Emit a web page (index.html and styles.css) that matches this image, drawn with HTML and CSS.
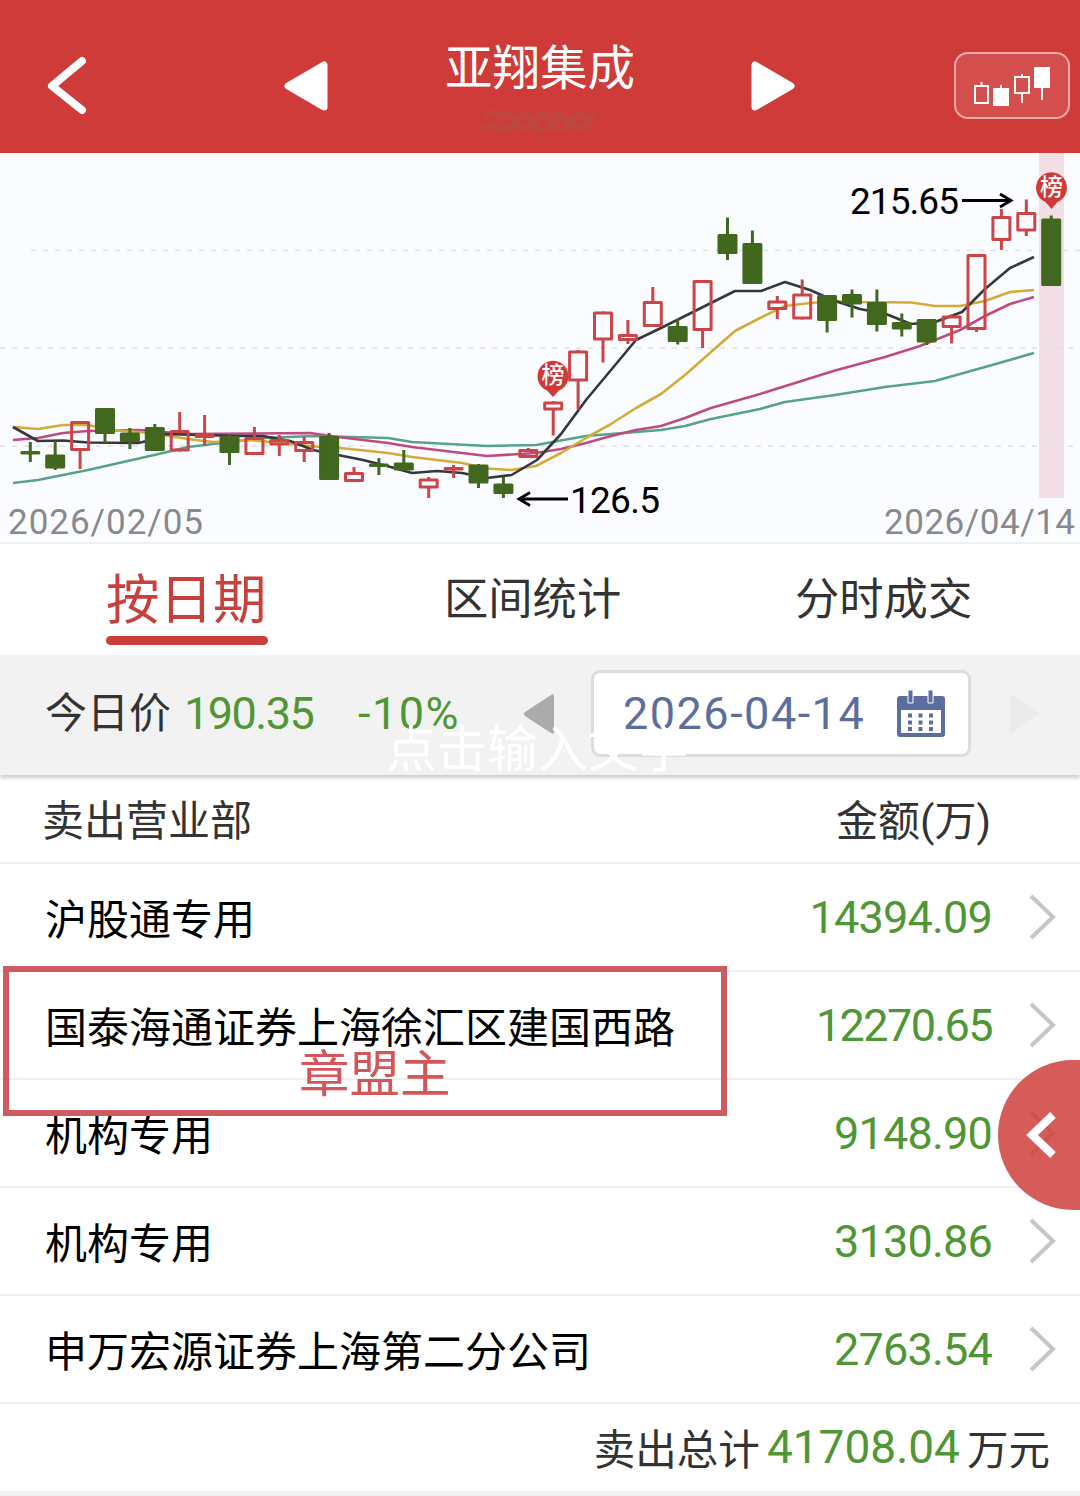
FILE: index.html
```
<!DOCTYPE html>
<html lang="zh-CN">
<head>
    <meta charset="UTF-8">
    <meta name="viewport" content="width=device-width, initial-scale=1.0">
    <title>亚翔集成</title>
    <link rel="stylesheet" href="styles.css">
</head>
<body>
    <header class="top-bar">
        <svg class="back" width="44" height="62" viewBox="0 0 44 62"><path d="M37 6L7 31L37 55"/></svg>
        <svg class="arrow prev" width="44" height="50" viewBox="0 0 44 50"><path d="M40 4V46L4 25Z"/></svg>
        <div class="title">
            <h1>亚翔集成</h1>
            <svg class="code" width="126" height="32" viewBox="0 0 126 32"><path d="M4 12l10-4 6 6 9-5 8 8 9-7 7 6 11-7 6 7 9-6 8 7 11-8 9 6 8-5M2 25l9-4 10 5 12-6 8 5 11-4 9 6 10-6 11 4 9-6 8 6 11-4"/></svg>
        </div>
        <svg class="arrow next" width="44" height="50" viewBox="0 0 44 50"><path d="M4 4V46L40 25Z"/></svg>
        <button class="kline-btn">
            <svg width="80" height="42" viewBox="0 0 80 42">
                <path class="outline" d="M3 21h13v17H3zM9.500 17v4M43 12h14v16H43zM50 9v3M50 28v10M29 20v4M70 23v12"/>
                <path class="solid" d="M21 23h16v18H21zM62 2h16v21H62z"/>
            </svg>
        </button>
    </header>

    <!-- K line chart -->
    <section class="chart">
        <svg id="kline" width="1080" height="390" viewBox="0 153 1080 390">
            <rect class="today" x="1039" y="153" width="25" height="345"/>
            <path class="grid" d="M31 250.5H1080M0 348H1080M0 446H1080"/>
            <polyline class="ma ma60" points="13,483 38,480 63,475 88,470 163,453 188,447 213,444 238,441 263,438 313,436 388,438 412,442 487,446 536,445 586,436 661,430 685,426 711,419 760,409 785,402 835,395 885,387 935,381 985,367 1034,353"/>
            <polyline class="ma ma20" points="13,440 38,438 63,433 88,431 138,430 188,434 310,433 338,437 388,443 412,447 487,456 520,454 536,453 561,449 586,443 611,436 636,430 661,426 685,418 711,408 760,394 835,370.5 885,357 920,346 960,330 985,316 1010,304 1034,297"/>
            <polyline class="ma ma10" points="13,427 38,429 63,425 88,425 113,430 150,433 188,439 213,442 250,440 290,444 320,447 340,448 388,453 412,457 437,460 462,463 487,468.5 511,470 536,466 561,453 586,438 611,424 636,408 661,394 685,375 711,352 735,331 760,318 785,306 810,303 835,301 860,302 911,302.5 935,306 960,306 985,301 1010,292 1034,290"/>
            <polyline class="ma ma5" points="13,427 38,441 63,440.5 88,442.5 138,443 147,441 163,434 238,436 263,436 290,441 313,450 338,455 363,460 387,466 412,473 437,471 462,473 487,478 511.5,475 537,460 561,434 586,400 611,370 636,340 661,328 735,291 761,291 785,282 810,290 835,301 860,309 886,314 911,324 935,322 962,312 985,289 1010,268 1034,257"/>
            <g id="candles"></g>
            <g class="pin">
                <path d="M553 397L547 390.500A15.500 15.500 0 1 1 559 390.500Z"/>
                <text x="553" y="383">榜</text>
            </g>
            <g class="pin">
                <path d="M1051.500 209L1045.500 202A15.500 15.500 0 1 1 1057.500 202Z"/>
                <text x="1051.500" y="195">榜</text>
            </g>
            <path class="pointer" d="M962 200.500H1009M1000 194L1011 200.500L1000 207M568 499H521M530 492.500L519 499L530 505.500"/>
            <text class="price" x="850" y="214" textLength="109">215.65</text>
            <text class="price" x="570" y="512.500" textLength="90">126.5</text>
            <text class="day" x="8" y="534" textLength="195">2026/02/05</text>
            <text class="day" x="884" y="534" textLength="191">2026/04/14</text>
        </svg>
    </section>

    <nav class="tabs">
        <a class="tab active">按日期</a>
        <a class="tab">区间统计</a>
        <a class="tab">分时成交</a>
    </nav>

    <section class="date-bar">
        <span class="label">今日价</span>
        <span class="num price-now">190.35</span>
        <span class="num change">-10%</span>
        <svg class="day-prev" width="32" height="42" viewBox="0 0 32 42"><path d="M31 3V39Q31 42 28 40L2 23Q0 21 2 19L28 2Q31 0 31 3Z"/></svg>
        <div class="date-box">
            <span class="num">2026-04-14</span>
            <svg width="48" height="48" viewBox="0 0 48 48">
                <path fill-rule="evenodd" d="M3 6H45Q48 6 48 9V44Q48 47 45 47H3Q0 47 0 44V9Q0 6 3 6ZM4 20V43H44V20Z"/>
                <path class="ring" d="M11 0h5v13h-5zM31 0h5v13h-5z"/>
                <path d="M11 23.500h4v4h-4zM21.500 23.500h4v4h-4zM32 23.500h4v4h-4zM11 30.500h4v4h-4zM21.500 30.500h4v4h-4zM32 30.500h4v4h-4zM11 37h4v4h-4zM21.500 37h4v4h-4zM32 37h4v4h-4z"/>
            </svg>
        </div>
        <svg class="day-next" width="32" height="42" viewBox="0 0 32 42"><path d="M1 1V41L31 21Z"/></svg>
        <span class="watermark">点击输入文字</span>
    </section>

    <!-- Sell seats -->
    <section class="seats">
        <div class="row head">
            <span>卖出营业部</span>
            <span class="amount">金额(万)</span>
        </div>
        <div class="row">
            <span class="name">沪股通专用</span>
            <span class="num amount">14394.09</span>
            <svg class="more" width="28" height="46" viewBox="0 0 28 46"><path d="M2 2L24 23L2 44"/></svg>
        </div>
        <div class="row">
            <span class="name">国泰海通证券上海徐汇区建国西路</span>
            <span class="num amount tight">12270.65</span>
            <svg class="more" width="28" height="46" viewBox="0 0 28 46"><path d="M2 2L24 23L2 44"/></svg>
            <div class="mark"><span>章盟主</span></div>
        </div>
        <div class="row">
            <span class="name">机构专用</span>
            <span class="num amount">9148.90</span>
            <svg class="more" width="28" height="46" viewBox="0 0 28 46"><path d="M2 2L24 23L2 44"/></svg>
            <button class="drawer">
                <svg width="32" height="48" viewBox="0 0 32 48"><path d="M27 4L6 24L27 44"/></svg>
            </button>
        </div>
        <div class="row">
            <span class="name">机构专用</span>
            <span class="num amount">3130.86</span>
            <svg class="more" width="28" height="46" viewBox="0 0 28 46"><path d="M2 2L24 23L2 44"/></svg>
        </div>
        <div class="row">
            <span class="name">申万宏源证券上海第二分公司</span>
            <span class="num amount">2763.54</span>
            <svg class="more" width="28" height="46" viewBox="0 0 28 46"><path d="M2 2L24 23L2 44"/></svg>
        </div>
        <div class="total">
            <span>卖出总计</span>
            <span class="num">41708.04</span>
            <span>万元</span>
        </div>
    </section>

    <script>
        // up/down, high, body top, body bottom, low
        const candles = [
            ['g', 442, 451, 454, 462], ['g', 441, 454.5, 468.5, 470], ['r', 421, 421, 451, 469],
            ['g', 408, 408, 434, 442.5], ['g', 428, 432.5, 442, 449], ['g', 424, 427, 451, 451],
            ['r', 412, 430, 451.5, 451.5], ['r', 415, 434, 438, 446], ['g', 435, 436, 453, 465],
            ['r', 427, 437, 455, 455], ['r', 435, 439, 445.5, 456], ['r', 437, 441, 452, 462],
            ['g', 433, 436, 480, 480], ['r', 467, 472, 482, 482], ['g', 458, 463.5, 465, 475],
            ['g', 450, 462.5, 470.5, 470.5], ['r', 477, 478.5, 488.5, 498], ['r', 465, 467, 470, 478],
            ['g', 464, 464.5, 483.5, 488], ['g', 477, 483.5, 494, 498], ['r', 448, 449, 458, 458],
            ['r', 401, 401.5, 410.5, 435.5], ['r', 350, 350.5, 381.5, 409.5], ['r', 311.5, 311.5, 340.5, 362.5],
            ['r', 320, 334, 341, 344], ['r', 287, 301, 327, 327], ['g', 319, 326, 342, 344.5],
            ['r', 280, 280, 331, 348], ['g', 217.5, 234, 254, 260], ['g', 230.5, 243, 284, 284],
            ['r', 296, 300.5, 310, 319], ['r', 279.5, 293.5, 319.5, 319.5], ['g', 295, 295, 321, 332.5],
            ['g', 289.5, 294, 304.5, 317.5], ['g', 289.5, 302, 325, 331.5], ['g', 313.5, 322, 329.5, 336.5],
            ['g', 319, 319, 342.5, 345], ['r', 314.5, 315.5, 328, 343.5], ['r', 254, 254, 330, 332],
            ['r', 209, 216, 241, 250], ['r', 199.5, 212, 231.5, 236], ['g', 215.5, 218.5, 286, 286]
        ];

        let shapes = '';
        candles.forEach(([type, high, top, bottom, low], i) => {
            const x = 30.3 + i * 24.9;
            const bodyHeight = Math.max(bottom - top - 3, 0.5);
            shapes += `
                <g class="candle ${type}">
                    <path d="M${x} ${high}V${top + 1}M${x} ${bottom - 1}V${low}"/>
                    <rect x="${x - 8.5}" y="${top + 1.5}" width="17" height="${bodyHeight}"/>
                </g>
            `;
        });
        document.getElementById('candles').innerHTML = shapes;
    </script>
</body>
</html>
```
FILE: styles.css
```
/* General Styles */
* {
    box-sizing: border-box;
}

body {
    font-family: Roboto, "Noto Sans CJK SC", sans-serif;
    margin: 0;
    width: 1080px;
    height: 1496px;
    overflow: hidden;
    background-color: #fff;
    color: #333;
}

svg {
    display: block;
    flex: none;
}

button {
    border: none;
    padding: 0;
}

.num {
    font-size: 45px;
    letter-spacing: -0.8px;
    color: #4f9634;
}

/* Header */
.top-bar {
    display: flex;
    height: 153px;
    padding-left: 45px;
    background: #ce3b39;
}

.back {
    margin-top: 55px;
    fill: none;
    stroke: #fff;
    stroke-width: 8;
    stroke-linecap: round;
    stroke-linejoin: round;
}

.arrow {
    margin-top: 61px;
    fill: #fff;
    stroke: #fff;
    stroke-width: 7;
    stroke-linejoin: round;
}

.prev {
    margin-left: 195px;
}

.title {
    width: 192px;
    margin-left: 117px;
}

.title h1 {
    margin: 34px 0 0;
    font-size: 47.5px;
    line-height: 70px;
    font-weight: 400;
    color: #fff;
    white-space: nowrap;
}

.code {
    margin: 0 0 0 36px;
    fill: none;
    stroke: #a0604e;
    stroke-width: 4;
    opacity: 0.5;
    filter: blur(2px);
}

.next {
    margin-left: 114px;
}

.kline-btn {
    display: flex;
    width: 116px;
    height: 67px;
    margin: 52px 0 0 159px;
    padding: 11px 0 0 16px;
    border: 2px solid #f0aaa9;
    border-radius: 14px;
    background: #d34e4c;
}

.kline-btn .outline {
    fill: none;
    stroke: #fff;
    stroke-width: 2;
}

.kline-btn .solid {
    fill: #fff;
}

/* Chart */
.chart {
    height: 391px;
    background: #fbfcff;
    border-bottom: 2px solid #f0f1f3;
}

.today {
    fill: #f2dfe5;
}

.grid {
    stroke: #e0e0e7;
    stroke-width: 1.5;
    stroke-dasharray: 5 7;
}

.ma {
    fill: none;
    stroke-width: 2.6;
    stroke-linejoin: round;
}

.ma5 {
    stroke: #35373e;
}

.ma10 {
    stroke: #d3ac38;
}

.ma20 {
    stroke: #bf4a82;
}

.ma60 {
    stroke: #55a38a;
}

.candle {
    stroke-width: 3;
    stroke-linejoin: round;
}

.candle.r {
    fill: none;
    stroke: #cb4548;
}

.candle.g {
    fill: #42671e;
    stroke: #42671e;
}

.pin path {
    fill: #cf3a36;
}

.pin text {
    font-size: 23px;
    font-weight: 500;
    fill: #fff;
    text-anchor: middle;
}

.pointer {
    fill: none;
    stroke: #000;
    stroke-width: 2.8;
}

.price {
    font-size: 37px;
    fill: #000;
}

.day {
    font-size: 35px;
    fill: #88898c;
}

/* Tabs */
.tabs {
    display: flex;
    height: 111px;
    padding-left: 106px;
}

.tab {
    width: 178px;
    margin-left: 176px;
    font-size: 44.3px;
    line-height: 113px;
    white-space: nowrap;
}

.tab:last-child {
    margin-left: 173px;
}

.tab.active {
    position: relative;
    width: 162px;
    margin-left: 0;
    font-size: 53.5px;
    color: #c83f3b;
}

.tab.active::after {
    content: "";
    position: absolute;
    left: 0;
    bottom: 10px;
    width: 162px;
    height: 9px;
    border-radius: 5px;
    background: #ca3d3a;
}

/* Date bar */
.date-bar {
    position: relative;
    display: flex;
    align-items: center;
    height: 120px;
    padding: 0 0 3px 45px;
    background: #f2f2f2;
    box-shadow: 0 3px 4px rgba(0, 0, 0, 0.2);
}

.label {
    width: 139px;
    font-size: 42px;
    line-height: 60px;
}

.price-now {
    width: 174px;
    letter-spacing: -1.5px;
}

.change {
    width: 165px;
    letter-spacing: 1.5px;
}

.day-prev {
    fill: #ababab;
}

.date-box {
    display: flex;
    align-items: center;
    justify-content: space-between;
    width: 380px;
    height: 87px;
    margin-left: 36px;
    padding: 0 23px 0 29px;
    background: #fff;
    border: 3px solid #dcdcdc;
    border-radius: 9px;
}

.date-box .num {
    color: #5b6e9e;
    letter-spacing: 1.5px;
}

.date-box svg {
    fill: #5b6e9e;
}

.date-box .ring {
    stroke: #fff;
    stroke-width: 1;
}

.day-next {
    margin-left: 38px;
    fill: #ebebeb;
}

.watermark {
    position: absolute;
    left: 386px;
    top: 60px;
    font-size: 50.5px;
    line-height: 70px;
    color: #fff;
    white-space: nowrap;
}

/* Seats */
.row {
    position: relative;
    display: flex;
    align-items: center;
    height: 108px;
    padding: 0 23px 0 45px;
    border-bottom: 2px solid #f0f0f0;
}

.row.head {
    height: 89px;
    padding: 0 23px 3px 42px;
    font-size: 42px;
}

.name {
    padding-bottom: 2px;
    font-size: 42px;
    color: #000;
}

.amount {
    margin-left: auto;
}

.tight {
    letter-spacing: -1.6px;
}

.head .amount {
    margin-right: 66px;
}

.more {
    margin-left: 37px;
    fill: none;
    stroke: #c6c6c6;
    stroke-width: 4;
}

.mark {
    position: absolute;
    left: 3px;
    top: -6px;
    z-index: 1;
    width: 724px;
    height: 150px;
    padding: 68px 0 0 290px;
    border: 6px solid #cc5c60;
    font-size: 50.5px;
    line-height: 70px;
    color: #d3565a;
}

.drawer {
    position: absolute;
    right: 0;
    top: -20px;
    width: 82px;
    height: 150px;
    padding-left: 28px;
    border-radius: 75px 0 0 75px;
    background: rgba(206, 59, 57, 0.83);
}

.drawer svg {
    fill: none;
    stroke: #fff;
    stroke-width: 8;
}

.total {
    display: flex;
    align-items: center;
    justify-content: flex-end;
    gap: 7px;
    height: 87px;
    padding: 0 30px 2px 0;
    font-size: 41.5px;
}

.total .num {
    font-size: 46px;
    letter-spacing: 0;
}

.seats {
    border-bottom: 7px solid #f2f2f2;
}
```
